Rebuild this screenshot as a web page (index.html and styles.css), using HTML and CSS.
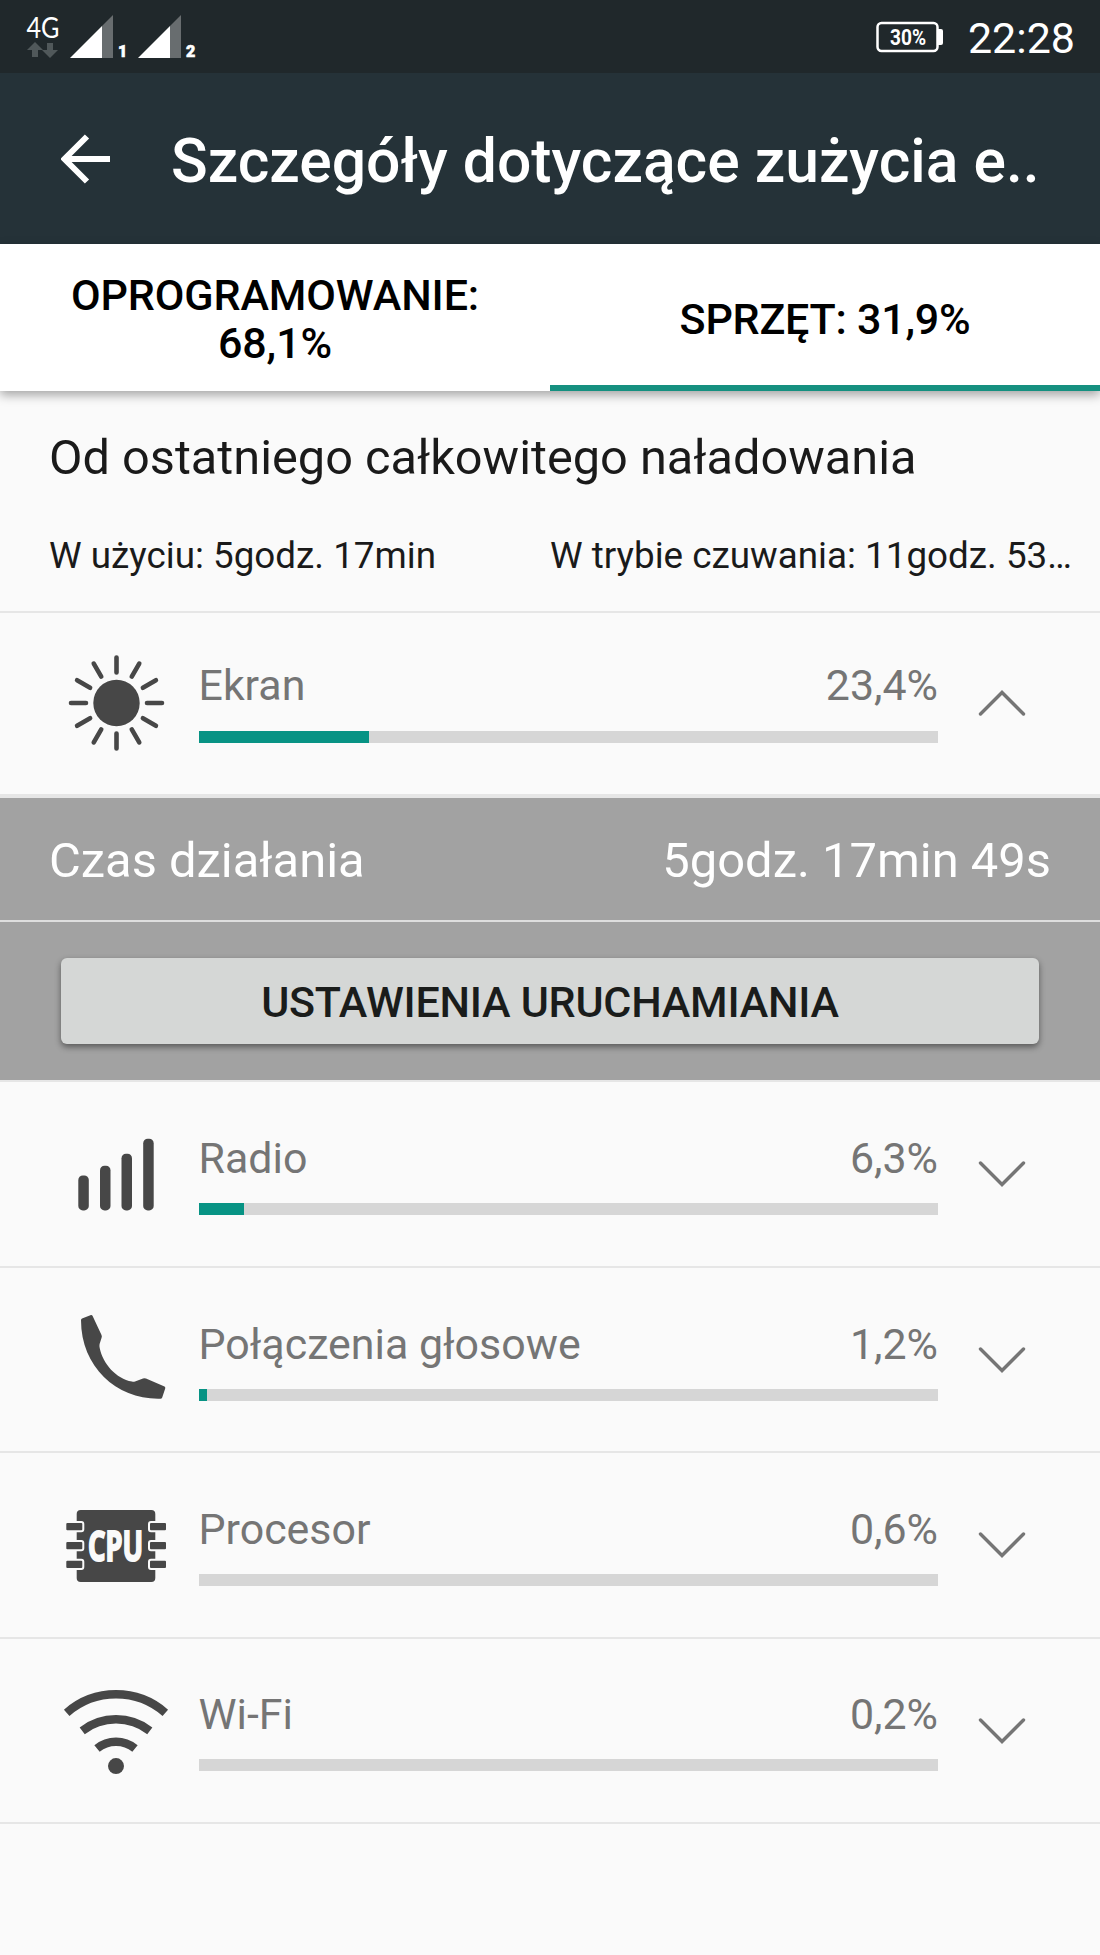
FILE: index.html
```html
<!DOCTYPE html>
<html lang="pl">
<head>
    <meta charset="UTF-8">
    <meta name="viewport" content="width=device-width, initial-scale=1.0">
    <title>Szczegóły dotyczące zużycia energii</title>
    <link rel="stylesheet" href="styles.css">
</head>
<body>

<div class="status-bar">
    <svg class="status-icons" width="200" height="73" viewBox="0 0 200 73">
        <text class="network" x="26.500" y="38" textLength="33" lengthAdjust="spacingAndGlyphs">4G</text>
        <path class="traffic" d="M35 42l8 8h-5v7h-6v-7h-5z"/>
        <path class="traffic" d="M50 58l8-8h-5v-7h-6v7h-5z"/>
        <path class="signal-off" d="M102 26L113 15V58H102z"/>
        <path class="signal-on" d="M70 58L102 26V58z"/>
        <text class="sim" x="118" y="57">1</text>
        <path class="signal-off" d="M170 26L181 15V58H170z"/>
        <path class="signal-on" d="M138 58L170 26V58z"/>
        <text class="sim" x="186" y="57">2</text>
    </svg>
    <div class="status-right">
        <svg width="68" height="32" viewBox="0 0 68 32">
            <rect class="battery" x="1.500" y="2" width="60" height="28" rx="4"/>
            <path class="signal-on" d="M62 8h3q2 0 2 2v12q0 2-2 2h-3z"/>
            <text class="battery-text" x="14" y="24" textLength="36" lengthAdjust="spacingAndGlyphs">30%</text>
        </svg>
        <span class="clock">22:28</span>
    </div>
</div>

<div class="app-bar">
    <svg class="back" width="50" height="50" viewBox="0 0 50 50">
        <path d="M26 2.500L3.500 25L26 47.500M4 25H49"/>
    </svg>
    <h1>Szczegóły dotyczące zużycia e..</h1>
</div>

<div class="tabs">
    <div class="tab">OPROGRAMOWANIE:<br>68,1%</div>
    <div class="tab active">SPRZĘT: 31,9%</div>
</div>

<div class="summary">
    <h2>Od ostatniego całkowitego naładowania</h2>
    <div class="times">
        <span>W użyciu: 5godz. 17min</span>
        <span>W trybie czuwania: 11godz. 53…</span>
    </div>
</div>

<div class="row expanded">
    <svg class="icon" viewBox="0 0 108 108">
        <circle cx="54.500" cy="54" r="23.200"/>
        <g class="rays">
            <path d="M54.500 8.500v15M54.500 84.500v15M9 54h15M85 54h15"/>
            <path d="M54.500 8.500v15M54.500 84.500v15M9 54h15M85 54h15" transform="rotate(30 54.5 54)"/>
            <path d="M54.500 8.500v15M54.500 84.500v15M9 54h15M85 54h15" transform="rotate(60 54.5 54)"/>
        </g>
    </svg>
    <div class="usage">
        <div class="label"><span>Ekran</span><span>23,4%</span></div>
        <div class="bar"><div class="fill" style="width: 23%"></div></div>
    </div>
    <svg class="chevron" viewBox="0 0 48 28"><path d="M2.500 25L24 3.500L45.500 25"/></svg>
</div>

<div class="details">
    <div class="detail-line">
        <span>Czas działania</span>
        <span>5godz. 17min 49s</span>
    </div>
    <div class="detail-action">
        <button>USTAWIENIA URUCHAMIANIA</button>
    </div>
</div>

<div class="row first">
    <svg class="icon" viewBox="0 0 108 108">
        <rect x="16.300" y="57.400" width="10.500" height="35" rx="4.500"/>
        <rect x="38" y="47.700" width="10.500" height="44.700" rx="4.500"/>
        <rect x="59.500" y="35.700" width="10.500" height="56.700" rx="4.500"/>
        <rect x="81.200" y="20.700" width="10.500" height="71.700" rx="4.500"/>
    </svg>
    <div class="usage">
        <div class="label"><span>Radio</span><span>6,3%</span></div>
        <div class="bar"><div class="fill" style="width: 6.1%"></div></div>
    </div>
    <svg class="chevron" viewBox="0 0 48 28"><path d="M2.500 3L24 24.500L45.500 3"/></svg>
</div>

<div class="row">
    <svg class="icon" viewBox="0 0 108 108">
        <path d="M20 14.500L29 11Q30 10.800 30.500 11.800L39.500 31Q40.200 32.500 39.500 34L37.600 40Q37.200 42 37.700 44C41 60 54 74.500 70 77.600Q71.500 78 73 77.500L81 74.400Q82.500 74 84 74.500L102.500 82.500Q103.600 83.200 103.200 84.500L100.200 93.500Q99.700 94.700 98.500 94.700C56 96 19 64 19 16Q19 15 20 14.500z"/>
    </svg>
    <div class="usage">
        <div class="label"><span>Połączenia głosowe</span><span>1,2%</span></div>
        <div class="bar"><div class="fill" style="width: 1.1%"></div></div>
    </div>
    <svg class="chevron" viewBox="0 0 48 28"><path d="M2.500 3L24 24.500L45.500 3"/></svg>
</div>

<div class="row">
    <svg class="icon" viewBox="0 0 108 108">
        <rect x="14.700" y="21" width="78.600" height="72" rx="4"/>
        <g class="pins">
            <rect x="3.300" y="33" width="18" height="9.300" rx="2"/>
            <rect x="3.300" y="51.900" width="18" height="9.300" rx="2"/>
            <rect x="3.300" y="70.700" width="18" height="9.300" rx="2"/>
            <rect x="87" y="33" width="18" height="9.300" rx="2"/>
            <rect x="87" y="51.900" width="18" height="9.300" rx="2"/>
            <rect x="87" y="70.700" width="18" height="9.300" rx="2"/>
        </g>
        <text class="cpu" transform="translate(53.5 71.5) scale(0.65 1)">CPU</text>
    </svg>
    <div class="usage">
        <div class="label"><span>Procesor</span><span>0,6%</span></div>
        <div class="bar"></div>
    </div>
    <svg class="chevron" viewBox="0 0 48 28"><path d="M2.500 3L24 24.500L45.500 3"/></svg>
</div>

<div class="row">
    <svg class="icon" viewBox="0 0 108 108">
        <g class="waves">
            <path d="M4.700 37.800A75 75 0 0 1 103.300 37.800"/>
            <path d="M20.200 55.800A55.400 55.400 0 0 1 87.800 55.800"/>
            <path d="M35 73.500A30 30 0 0 1 73 73.500"/>
        </g>
        <circle cx="54" cy="91.100" r="8"/>
    </svg>
    <div class="usage">
        <div class="label"><span>Wi-Fi</span><span>0,2%</span></div>
        <div class="bar"></div>
    </div>
    <svg class="chevron" viewBox="0 0 48 28"><path d="M2.500 3L24 24.500L45.500 3"/></svg>
</div>

</body>
</html>
```

FILE: styles.css
```css
* {
    box-sizing: border-box;
}

body {
    font-family: Roboto, sans-serif;
    background-color: #fafafa;
    margin: 0;
    min-height: 1955px;
    color: #1a1a1a;
}

svg {
    display: block;
    flex: none;
}

/* Status bar */
.status-bar {
    display: flex;
    justify-content: space-between;
    height: 73px;
    background-color: #20282b;
    color: white;
}

.network {
    font: 400 28px Lato, sans-serif;
    fill: white;
}

.traffic {
    fill: #50585a;
}

.signal-on {
    fill: white;
}

.signal-off {
    fill: #686d6f;
}

.sim {
    font: 900 16px Roboto, sans-serif;
    fill: white;
    stroke: white;
    stroke-width: 0.6;
}

.status-right {
    display: flex;
    align-items: center;
    gap: 24px;
    padding-right: 25px;
}

.battery {
    fill: none;
    stroke: white;
    stroke-width: 2.5;
}

.battery-text {
    font: 700 22px Roboto, sans-serif;
    fill: white;
}

.clock {
    font-size: 43px;
    line-height: 50px;
    padding-top: 2px;
}

/* App bar */
.app-bar {
    display: flex;
    align-items: center;
    height: 171px;
    padding: 0 0 0 61px;
    background-color: #253238;
    color: white;
}

.back {
    margin-right: 60px;
    fill: none;
    stroke: white;
    stroke-width: 6;
}

h1 {
    margin: 0;
    padding-top: 7px;
    font-size: 60.6px;
    font-weight: 500;
    line-height: 72px;
    white-space: nowrap;
}

/* Tabs */
.tabs {
    display: flex;
    height: 147px;
    background-color: white;
    box-shadow: 0 4px 10px rgba(0, 0, 0, 0.35);
}

.tab {
    display: flex;
    flex: 1;
    align-items: center;
    justify-content: center;
    padding-top: 8px;
    border-bottom: 6px solid white;
    color: black;
    font-size: 43px;
    font-weight: 500;
    line-height: 48px;
    letter-spacing: -0.1px;
    text-align: center;
}

.tab.active {
    border-bottom-color: #159080;
    letter-spacing: -0.25px;
}

/* Summary */
.summary {
    height: 222px;
    padding: 38px 0 0 49px;
    border-bottom: 2px solid #e6e6e6;
}

h2 {
    margin: 0 0 47px;
    font-size: 48.7px;
    font-weight: 400;
    line-height: 58px;
}

.times {
    display: grid;
    grid-template-columns: 501px 1fr;
    font-size: 36.8px;
    line-height: 44px;
    white-space: nowrap;
}

/* Usage rows */
.row {
    display: flex;
    height: 185.3px;
    padding: 0 74px 0 62px;
    border-bottom: 2px solid #e6e6e6;
}

.row.expanded {
    height: 185px;
    border-bottom: 4px solid #e6e6e6;
}

.row.first {
    height: 188px;
    border-top: 2px solid #e6e6e6;
}

.icon {
    width: 108px;
    height: 108px;
    margin: 36px 28.5px 0 0;
    fill: #474747;
}

.rays {
    stroke: #474747;
    stroke-width: 4.6;
    stroke-linecap: round;
}

.pins {
    stroke: #fafafa;
    stroke-width: 2;
}

.cpu {
    font: 700 42px "Noto Sans", sans-serif;
    fill: #fafafa;
    stroke: #fafafa;
    stroke-width: 2;
    text-anchor: middle;
}

.waves {
    fill: none;
    stroke: #474747;
    stroke-width: 8.4;
}

.usage {
    flex: 1;
    padding-top: 50.5px;
}

.expanded .usage {
    padding-top: 48px;
}

.label {
    display: flex;
    justify-content: space-between;
    height: 50px;
    margin-bottom: 20px;
    color: #757575;
    font-size: 42.9px;
    line-height: 50px;
}

.expanded .label {
    line-height: 49px;
}

.bar {
    height: 12px;
    background-color: #d6d6d6;
}

.fill {
    height: 12px;
    background-color: #079384;
}

.chevron {
    width: 48px;
    height: 28px;
    margin: 78px 0 0 40px;
    fill: none;
    stroke: #757575;
    stroke-width: 3.4;
    stroke-linecap: round;
}

.expanded .chevron {
    margin-top: 76px;
}

/* Expanded details */
.details {
    background-color: #a2a2a2;
}

.detail-line {
    display: flex;
    justify-content: space-between;
    height: 124px;
    padding: 2px 49px 0;
    border-bottom: 2px solid #dedede;
    color: white;
    font-size: 48.9px;
    line-height: 122px;
}

.detail-action {
    height: 158px;
    padding: 36px 61px 0;
}

button {
    display: block;
    width: 100%;
    height: 86px;
    padding: 2px 0 0;
    border: none;
    border-radius: 6px;
    background-color: #d5d7d6;
    box-shadow: 0 3px 6px rgba(0, 0, 0, 0.45);
    color: #1a1c1b;
    font-family: Roboto, sans-serif;
    font-size: 43px;
    font-weight: 500;
    letter-spacing: -0.25px;
}
```
